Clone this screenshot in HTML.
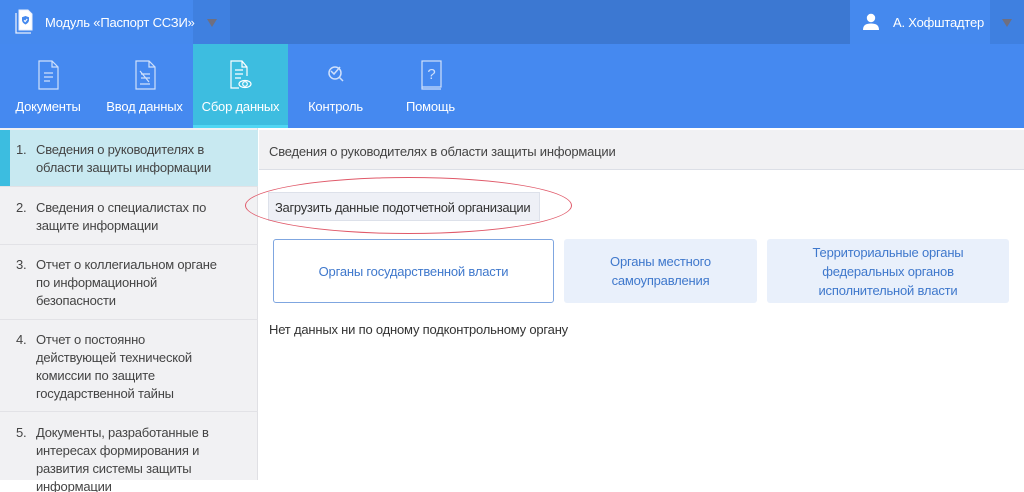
<!DOCTYPE html>
<html><head><meta charset="utf-8"><style>
*{margin:0;padding:0;box-sizing:border-box}
body{width:1024px;height:480px;overflow:hidden;font-family:"Liberation Sans","DejaVu Sans",sans-serif;background:#fff;position:relative;letter-spacing:-0.2px}
.abs{position:absolute}
.top{left:0;top:0;width:1024px;height:44px;background:#3c78d2}
.tl{left:0;top:0;width:193px;height:44px;background:#4589ee}
.tl2{left:193px;top:0;width:37px;height:44px;background:#3f80e0}
.tr{left:850px;top:0;width:140px;height:44px;background:#4589ee}
.tr2{left:990px;top:0;width:34px;height:44px;background:#3f80e0}
.tri{width:0;height:0;border-left:5px solid transparent;border-right:5px solid transparent;border-top:8px solid #6f6f80}
.nav{left:0;top:44px;width:1024px;height:84px;background:#4589f0}
.tab{top:44px;height:84px;color:#fff;font-size:13px;text-align:center;white-space:nowrap}
.tab span{position:absolute;left:0;right:0;top:55px}
.tab svg{position:absolute;top:14px;left:50%;margin-left:-13px}
.side{left:0;top:128px;width:258px;height:352px;background:#f1f1f3;border-right:1px solid #e0e0e4}
.item{left:0;width:258px;border-bottom:1px solid #e2e2e6;font-size:13px;color:#444;line-height:18px;overflow:hidden}
.item .n{position:absolute;left:16px}
.item .t{position:absolute;left:36px;width:184px}
.hdr{left:259px;top:130px;width:765px;height:40px;background:#f1f1f3;border-bottom:1px solid #dcdfe6;font-size:13px;color:#444;padding:14px 0 0 10px;white-space:nowrap}
.card{font-size:13px;color:#3f78cc;text-align:center;display:flex;align-items:center;justify-content:center;line-height:19px;border-radius:3px}
</style></head><body>
<div class="abs top"></div><div class="abs tl"></div><div class="abs tl2"></div><div class="abs tr"></div><div class="abs tr2"></div>
<svg class="abs" style="left:12px;top:9px" width="22" height="26" viewBox="0 0 22 26"><path d="M4 4V24H19" fill="none" stroke="#e8eefc" stroke-width="1.3"/><path d="M7 1H16L20 5V21H7Z" fill="#fff" stroke="#e8eefc"/><path d="M13.5 7L10 8.3V11C10 13 11.5 14.5 13.5 15.5C15.5 14.5 17 13 17 11V8.3Z" fill="#4589ee"/><path d="M12 11.3L13.2 12.5L15.2 10" stroke="#fff" stroke-width="1.1" fill="none"/></svg>
<div class="abs" style="left:45px;top:15px;font-size:13px;color:#fff;white-space:nowrap">Модуль «Паспорт ССЗИ»</div>
<div class="abs tri" style="left:207px;top:19px"></div>
<svg class="abs" style="left:862px;top:13px" width="18" height="18" viewBox="0 0 18 18"><circle cx="9" cy="5" r="4.2" fill="#fff"/><path d="M1 17C1 12 4 10.5 9 10.5S17 12 17 17Z" fill="#fff"/></svg>
<div class="abs" style="left:893px;top:15px;font-size:13px;color:#fff;white-space:nowrap">А. Хофштадтер</div>
<div class="abs tri" style="left:1002px;top:19px"></div>
<div class="abs nav"></div>
<div class="abs tab" style="left:0;width:96px"><svg width="26" height="34" viewBox="0 0 26 34"><path d="M4 3H17L23 9V31H4Z M17 3V9H23" fill="none" stroke="#cfe0fb" stroke-width="1.2"/><path d="M9 15H18M9 19H18M9 23H15" stroke="#cfe0fb" stroke-width="1.2"/></svg><span>Документы</span></div>
<div class="abs tab" style="left:96px;width:97px"><svg width="26" height="34" viewBox="0 0 26 34"><path d="M4 3H17L23 9V31H4Z M17 3V9H23" fill="none" stroke="#cfe0fb" stroke-width="1.2"/><path d="M8 13L17 24M9 16H18M9 20H18M8 26H18" stroke="#cfe0fb" stroke-width="1.2"/></svg><span>Ввод данных</span></div>
<div class="abs tab" style="left:193px;width:95px;background:#3dbde0"><svg width="26" height="34" viewBox="0 0 26 34"><path d="M19 18V9L14 3H3V30H11M14 3V9H19" fill="none" stroke="#fff" stroke-width="1.2"/><path d="M7 12H15M7 16H15M7 20H13" stroke="#fff" stroke-width="1.2"/><ellipse cx="17" cy="26" rx="6" ry="3.5" fill="none" stroke="#fff" stroke-width="1.2"/><circle cx="17" cy="26" r="2.3" fill="none" stroke="#fff" stroke-width="1.2"/></svg><span>Сбор данных</span><div class="abs" style="left:0;right:0;bottom:0;height:3px;background:#50d6f3"></div></div>
<div class="abs tab" style="left:288px;width:95px"><svg width="26" height="34" viewBox="0 0 26 34"><circle cx="12" cy="15" r="6" fill="none" stroke="#cfe0fb" stroke-width="1.5"/><path d="M16 19L20 23M8 13L11 16L17 9" fill="none" stroke="#cfe0fb" stroke-width="1.5"/></svg><span>Контроль</span></div>
<div class="abs tab" style="left:383px;width:95px"><svg width="26" height="34" viewBox="0 0 26 34"><rect x="4" y="3" width="19" height="26" fill="none" stroke="#cfe0fb" stroke-width="1.2"/><path d="M4 29V31H23" fill="none" stroke="#cfe0fb" stroke-width="1.2"/><text x="13.5" y="21" font-size="15" fill="#cfe0fb" text-anchor="middle" font-family="Liberation Sans">?</text></svg><span>Помощь</span></div>
<div class="abs side"></div>
<div class="abs item" style="top:130px;height:57px;background:#c8e9f1"><div class="abs" style="left:0;top:0;width:10px;height:57px;background:#3cbde0"></div><span class="n" style="top:11px">1.</span><span class="t" style="top:11px">Сведения о руководителях в области защиты информации</span></div>
<div class="abs item" style="top:187px;height:58px"><span class="n" style="top:12px">2.</span><span class="t" style="top:12px">Сведения о специалистах по защите информации</span></div>
<div class="abs item" style="top:245px;height:75px"><span class="n" style="top:11px">3.</span><span class="t" style="top:11px">Отчет о коллегиальном органе по информационной безопасности</span></div>
<div class="abs item" style="top:320px;height:92px"><span class="n" style="top:11px">4.</span><span class="t" style="top:11px;width:165px">Отчет о постоянно действующей технической комиссии по защите государственной тайны</span></div>
<div class="abs item" style="top:412px;height:80px;border:none"><span class="n" style="top:12px">5.</span><span class="t" style="top:12px">Документы, разработанные в интересах формирования и развития системы защиты информации</span></div>
<div class="abs hdr">Сведения о руководителях в области защиты информации</div>
<div class="abs" style="left:268px;top:192px;width:272px;height:29px;background:#eef0f6;border:1px solid #dde1ea;font-size:13px;color:#333;padding:7px 0 0 6px;white-space:nowrap;letter-spacing:-0.3px">Загрузить данные подотчетной организации</div>
<div class="abs" style="left:245px;top:177px;width:327px;height:57px;border:1.3px solid #e05a6a;border-radius:50%"></div>
<div class="abs card" style="left:273px;top:239px;width:281px;height:64px;border:1.5px solid #7fa6e0;background:#fff">Органы государственной власти</div>
<div class="abs card" style="left:564px;top:239px;width:193px;height:64px;background:#e9f0fb">Органы местного<br>самоуправления</div>
<div class="abs card" style="left:767px;top:239px;width:242px;height:64px;background:#e9f0fb">Территориальные органы<br>федеральных органов<br>исполнительной власти</div>
<div class="abs" style="left:269px;top:322px;font-size:13px;color:#333;white-space:nowrap">Нет данных ни по одному подконтрольному органу</div>
</body></html>
